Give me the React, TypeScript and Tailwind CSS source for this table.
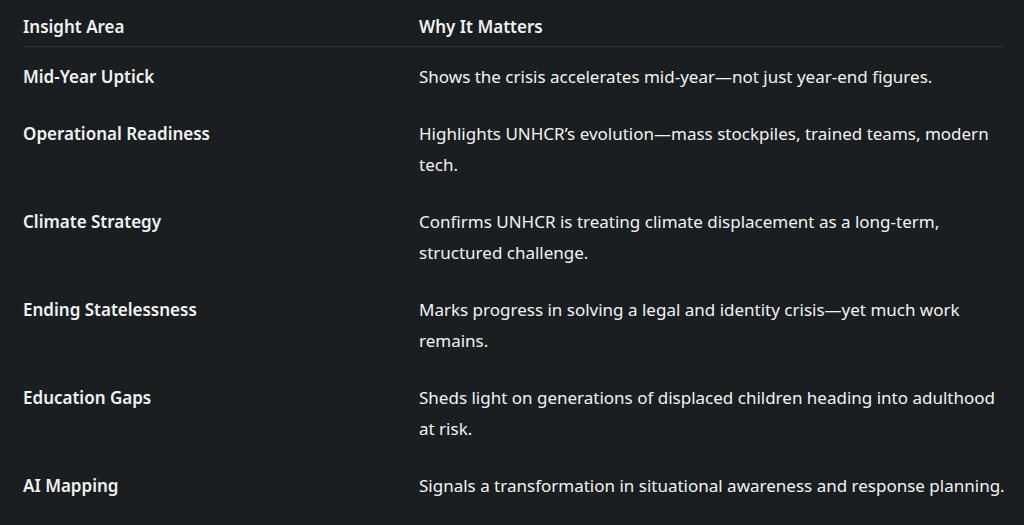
const rows = [
  ["Mid-Year Uptick", "Shows the crisis accelerates mid-year\u2014not just year-end figures."],
  ["Operational Readiness", "Highlights UNHCR\u2019s evolution\u2014mass stockpiles, trained teams, modern tech."],
  ["Climate Strategy", "Confirms UNHCR is treating climate displacement as a long-term, structured challenge."],
  ["Ending Statelessness", "Marks progress in solving a legal and identity crisis\u2014yet much work remains."],
  ["Education Gaps", "Sheds light on generations of displaced children heading into adulthood at risk."],
  ["AI Mapping", "Signals a transformation in situational awareness and response planning."],
];

export default function App() {
  return (
    <div className="w-[1024px] h-[525px] overflow-hidden bg-[#1a1e20] text-[#f1f3f4] font-['Noto_Sans',sans-serif] text-[17px] leading-[31px]">
      <div className="ml-[23px] w-[982px]">
        <div className="flex pt-[11px] pb-[4px] border-b border-[#2e3436] font-semibold">
          <div className="w-[396px] shrink-0">Insight Area</div>
          <div className="flex-1">Why It Matters</div>
        </div>
        {rows.map(([area, why]) => (
          <div key={area} className="flex pt-[14px] pb-[12px]">
            <div className="w-[396px] shrink-0 font-semibold">{area}</div>
            <div className="w-[592px] shrink-0">{why}</div>
          </div>
        ))}
      </div>
    </div>
  );
}
